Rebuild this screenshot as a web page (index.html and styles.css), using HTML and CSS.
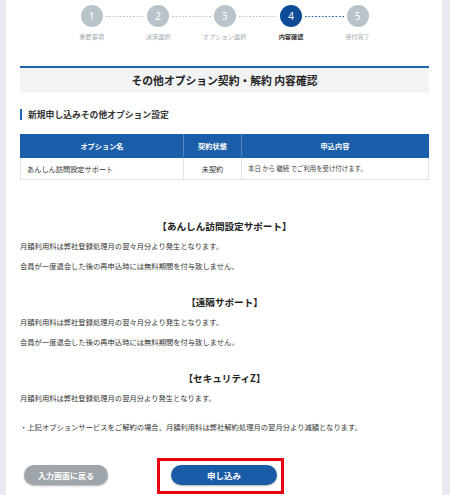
FILE: index.html
```html
<!DOCTYPE html>
<html lang="ja">
<head>
<meta charset="utf-8">
<title>その他オプション契約・解約 内容確認</title>
<link rel="stylesheet" href="styles.css">
</head>
<body>
<div class="panel">
  <ol class="steps">
    <li class="step"><span class="circle">1</span><span class="label">重要事項</span></li>
    <li class="step"><span class="circle">2</span><span class="label">決済選択</span></li>
    <li class="step"><span class="circle">3</span><span class="label">オプション選択</span></li>
    <li class="step active"><span class="circle">4</span><span class="label">内容確認</span></li>
    <li class="step"><span class="circle">5</span><span class="label">受付完了</span></li>
  </ol>

  <h1 class="title">その他オプション契約・解約 内容確認</h1>

  <h2 class="sub">新規申し込みその他オプション設定</h2>

  <table class="opt">
    <thead>
      <tr><th class="c1">オプション名</th><th class="c2">契約状態</th><th class="c3">申込内容</th></tr>
    </thead>
    <tbody>
      <tr><td class="c1">あんしん訪問設定サポート</td><td class="c2">未契約</td><td class="c3 small">本日 から 継続 でご利用を受け付けます。</td></tr>
    </tbody>
  </table>

  <div class="notes">
    <section class="note">
      <h3 class="note-h">【あんしん訪問設定サポート】</h3>
      <p>月額利用料は弊社登録処理月の翌々月分より発生となります。</p>
      <p>会員が一度退会した後の再申込時には無料期間を付与致しません。</p>
    </section>
    <section class="note">
      <h3 class="note-h">【遠隔サポート】</h3>
      <p>月額利用料は弊社登録処理月の翌々月分より発生となります。</p>
      <p>会員が一度退会した後の再申込時には無料期間を付与致しません。</p>
    </section>
    <section class="note">
      <h3 class="note-h">【セキュリティZ】</h3>
      <p>月額利用料は弊社登録処理月の翌月分より発生となります。</p>
    </section>
    <p class="caution">・上記オプションサービスをご解約の場合、月額利用料は弊社解約処理月の翌月分より減額となります。</p>
  </div>

  <div class="actions">
    <button class="btn btn-back" type="button">入力画面に戻る</button>
    <div class="highlight"><button class="btn btn-apply" type="button">申し込み</button></div>
  </div>
</div>
</body>
</html>
```

FILE: styles.css
```css
* { box-sizing: border-box; }
html, body { margin: 0; padding: 0; }
body {
  background: #e6eaee;
  font-family: "Noto Sans CJK JP", "Noto Sans", sans-serif;
  color: #333;
}
.panel {
  width: 436px;
  margin-left: 6px;
  min-height: 495px;
  background: #fff;
  padding: 5px 13px 0 14px;
}

/* steps */
.steps {
  list-style: none;
  margin: 0;
  padding: 0;
  display: flex;
  justify-content: center;
}
.step {
  position: relative;
  width: 66.5px;
  display: flex;
  flex-direction: column;
  align-items: center;
}
.step:not(:last-child)::after {
  content: "";
  position: absolute;
  top: 10.5px;
  left: calc(50% + 14px);
  width: 38.5px;
  height: 1.4px;
  background: linear-gradient(to right, #b9c3ca 1.3px, transparent 1.3px) 0 0 / 3.4px 100% repeat-x;
}
.step.active::after {
  background: linear-gradient(to right, #2e67b1 1.3px, transparent 1.3px) 0 0 / 3.4px 100% repeat-x;
}
.circle {
  width: 22px;
  height: 22px;
  border-radius: 50%;
  background: #b9c3ca;
  color: #fff;
  font-family: "Noto Sans", sans-serif;
  font-size: 10px;
  line-height: 22px;
  text-align: center;
}
.step.active .circle { background: #0f4b96; }
.label {
  margin-top: 6px;
  font-size: 6.2px;
  line-height: 8px;
  color: #a3abb1;
  white-space: nowrap;
}
.step.active .label { color: #333; font-weight: bold; }

/* title */
.title {
  margin: 25px 0 0;
  height: 27px;
  border-top: 2px solid #1e64b4;
  background: #f1f3f5;
  font-size: 10.8px;
  line-height: 25px;
  font-weight: bold;
  text-align: center;
  color: #222;
}
.sub {
  margin: 16px 0 0;
  padding-left: 6px;
  border-left: 2px solid #1e64b4;
  font-size: 8.8px;
  line-height: 11px;
  font-weight: bold;
  color: #333;
}

/* table */
.opt {
  margin-top: 14px;
  width: 409px;
  border-collapse: collapse;
  font-size: 7.2px;
}
.opt th {
  height: 23px;
  background: #1a5ea9;
  color: #fff;
  font-weight: bold;
  text-align: center;
  padding: 0;
  border: 1px solid #1a5ea9;
  border-right-color: #5583bd;
}
.opt th:last-child { border-right-color: #1a5ea9; }
.opt td {
  height: 22px;
  border: 1px solid #dde3ea;
  padding: 0 6px;
  color: #333;
}
.opt .c1 { width: 163px; }
.opt .c2 { width: 58px; text-align: center; }
.opt td.c1 { padding-left: 6px; }
.opt td.small { font-size: 6.4px; color: #444; }

/* notes */
.notes { padding-top: 20px; }
.note { margin-top: 19px; }
.note-h {
  margin: 0 0 3px;
  font-size: 9.6px;
  line-height: 14px;
  font-weight: bold;
  text-align: center;
  color: #222;
}
.note p, .caution {
  margin: 0;
  font-size: 7.3px;
  line-height: 20px;
  color: #333;
}
.caution { margin-top: 9px; }

/* buttons */
.actions {
  margin-top: 21px;
  display: flex;
  align-items: flex-start;
  padding-left: 4px;
}
.btn {
  border: none;
  height: 20px;
  border-radius: 10px;
  color: #fff;
  font-family: "Noto Sans CJK JP", sans-serif;
  font-weight: bold;
  padding: 0;
  box-shadow: 0 1px 2px rgba(0, 0, 0, 0.3);
}
.btn-back {
  width: 84px;
  margin-top: 7px;
  background: #9ea6ab;
  font-size: 8px;
}
.highlight {
  margin-left: 49px;
  border: 3px solid #e60012;
  padding: 4px 4px 6px 11px;
  display: flex;
}
.btn-apply {
  width: 106px;
  background: #1a5ca8;
  font-size: 8.5px;
}
```
